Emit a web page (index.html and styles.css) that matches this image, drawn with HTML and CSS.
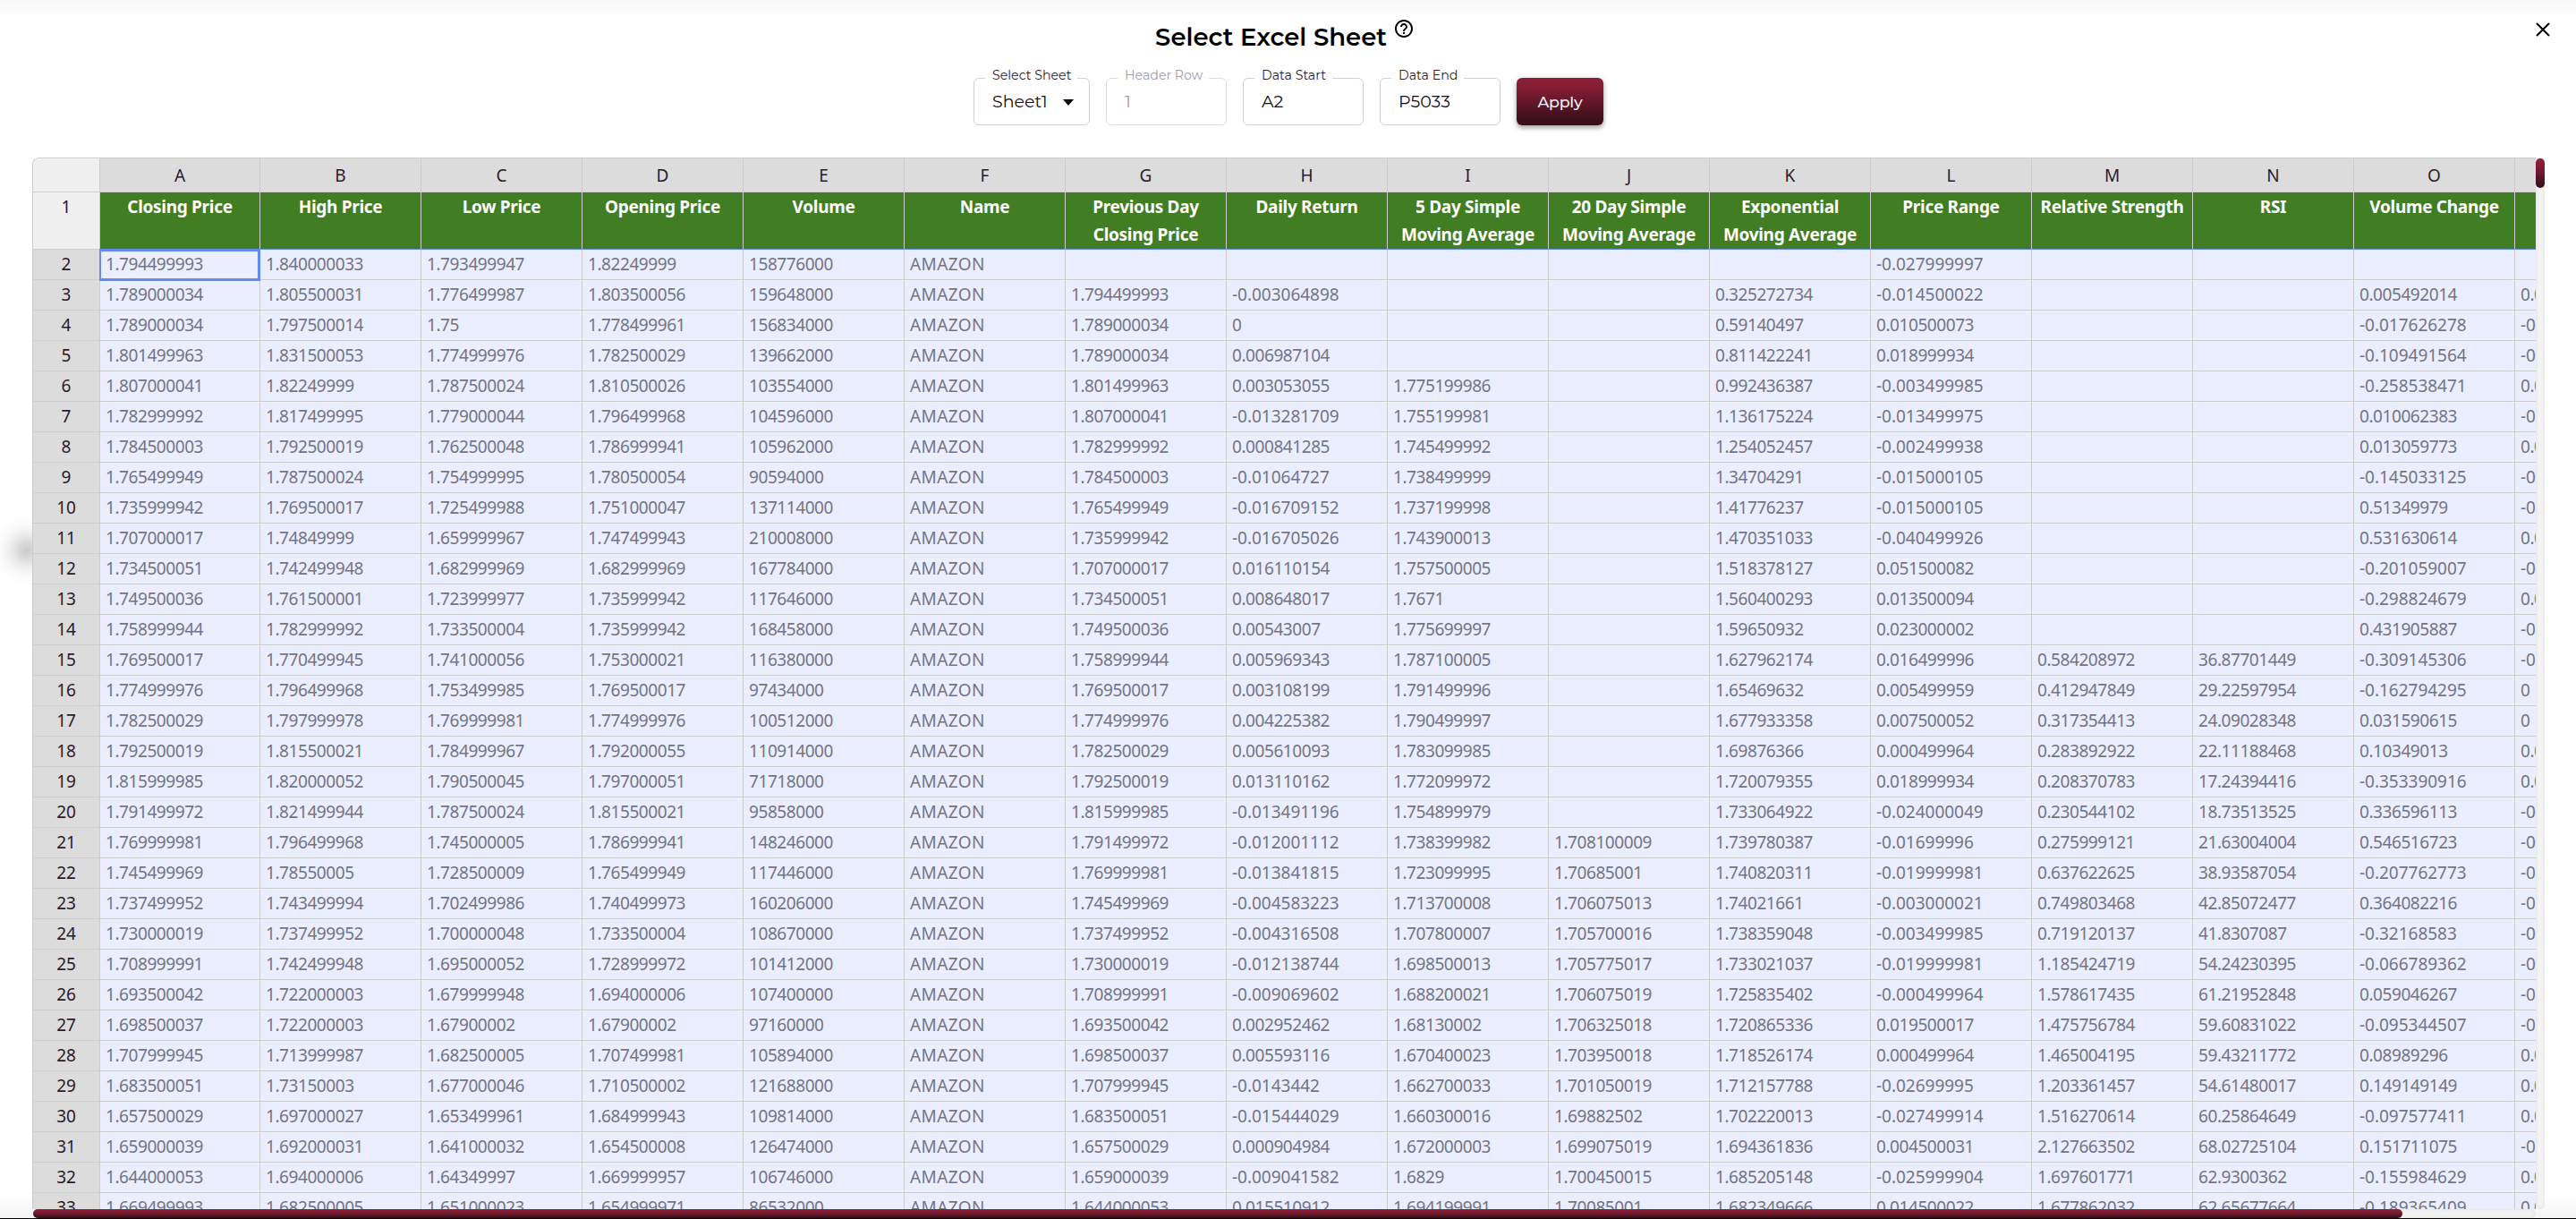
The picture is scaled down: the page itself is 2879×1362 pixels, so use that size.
FILE: index.html
```html
<!DOCTYPE html>
<html lang="en">
<head>
<meta charset="utf-8">
<title>Select Excel Sheet</title>
<link rel="stylesheet" href="styles.css">
</head>
<body>
<main class="dialog">
  <header class="dialog-head">
    <div class="title-row">
      <h1 class="title">Select Excel Sheet</h1>
      <svg class="help" viewBox="0 0 24 24"><path d="M11 18h2v-2h-2v2zm1-16C6.48 2 2 6.48 2 12s4.480 10 10 10 10-4.480 10-10S17.520 2 12 2zm0 18c-4.410 0-8-3.590-8-8s3.590-8 8-8 8 3.590 8 8-3.590 8-8 8zm0-14c-2.210 0-4 1.790-4 4h2c0-1.100.9-2 2-2s2 .9 2 2c0 2-3 1.750-3 5h2c0-2.250 3-2.500 3-5 0-2.210-1.790-4-4-4z"/></svg>
    </div>
    <svg class="close" viewBox="0 0 16 16"><path d="M1 1l14 14M15 1L1 15"/></svg>
    <form class="controls">
      <div class="field field-select"><span class="field-label">Select Sheet</span>Sheet1<i class="caret"></i></div>
      <div class="field field-disabled"><span class="field-label">Header Row</span>1</div>
      <div class="field"><span class="field-label">Data Start</span>A2</div>
      <div class="field"><span class="field-label">Data End</span>P5033</div>
      <button class="apply" type="button">Apply</button>
    </form>
  </header>
  <section class="viewer">
    <div class="sheet">
      <table class="grid">
        <colgroup id="cols"></colgroup>
        <thead id="head"></thead>
        <tbody id="body"></tbody>
      </table>
    </div>
    <div class="track track-v"><div class="thumb"></div></div>
    <div class="track track-h"><div class="thumb"></div></div>
  </section>
</main>
<script src="sheet.js"></script>
</body>
</html>
```

FILE: styles.css
```css
* { box-sizing: border-box; }
body { margin: 0; background: #fff; font-family: "Montserrat", "Inter", sans-serif; }

.dialog {
  height: 1362px;
  overflow: hidden;
  padding-left: 36px;
  border-bottom: 1px solid #000;
  background:
    linear-gradient(#f8f8f8, #f9f9f9 4px, #fff 18px) top / 100% 18px no-repeat,
    linear-gradient(#fff, #f4f4f4) bottom / 100% 26px no-repeat,
    radial-gradient(circle at 30px 615px, #cbcbcb 0, #d8d8d8 8px, #ececec 18px, #f9f9f9 28px, #fff 38px);
}

.dialog-head { position: relative; height: 176px; margin-left: -36px; padding-top: 21px; }
.title-row { display: flex; justify-content: center; gap: 7px; height: 40px; padding-right: 7px; }
.title { margin: 0; font-size: 27.5px; font-weight: 600; line-height: 40px; color: #000; }
.help { width: 24px; height: 24px; margin-top: -1px; }
.close { position: absolute; left: 2834px; top: 25px; width: 16px; height: 16px; stroke: #000; stroke-width: 2; }

.controls { display: flex; justify-content: center; gap: 18px; margin-top: 26px; padding-left: 1px; }
.field {
  position: relative;
  width: 135px;
  height: 53px;
  padding-left: 20px;
  border: 1px solid #cfd0de;
  border-radius: 6px;
  font-size: 19px;
  line-height: 51px;
  color: #180c18;
}
.field-select { width: 130px; }
.field-label {
  position: absolute;
  left: 12px;
  top: -12px;
  padding: 0 7px 0 8px;
  background: #fff;
  font-size: 14.2px;
  line-height: 16px;
  white-space: nowrap;
  color: #2c1c30;
}
.field-disabled, .field-disabled .field-label { color: #9c9dac; }
.field-disabled { border-color: #dcdce4; }
.caret {
  position: absolute;
  right: 17px;
  top: 23px;
  border: 6px solid transparent;
  border-top: 7px solid #000;
  border-bottom: 0;
}
.apply {
  width: 97px;
  height: 53px;
  padding: 0;
  border: 0;
  border-radius: 6px;
  background: linear-gradient(#8c1f35 0%, #851d33 22%, #3a0f1c 88%);
  box-shadow: 0 3px 5px rgba(0, 0, 0, .3), 0 1px 8px rgba(0, 0, 0, .12);
  font: 500 17.5px "Montserrat", "Inter", sans-serif;
  letter-spacing: -.3px;
  color: #f3eef0;
}

.viewer { display: grid; grid-template-columns: 2798px 10px; grid-template-rows: 1175px 10px; }
.sheet { overflow: hidden; border: 1px solid #ccc; border-width: 1px 0 0 1px; border-radius: 8px 0 0 0; }
.grid {
  width: 2954px;
  table-layout: fixed;
  border-collapse: separate;
  border-spacing: 0;
  font: 19px/31.5px "Noto Sans", "Open Sans", sans-serif;
}
.col-index { width: 75px; }
.col-first { width: 179px; }
.col { width: 180px; }
.grid th, .grid td {
  height: 34px;
  padding: 1px 0 0;
  border: 1px solid #ccc;
  border-width: 0 1px 1px 0;
  vertical-align: top;
  overflow: hidden;
  white-space: nowrap;
}
.grid th { background: #dcdcdc; font-weight: 400; text-align: center; color: #2b1a2b; }
.grid thead th { height: 38px; padding-top: 4px; }
.grid thead th:first-child, .grid .row-title th { background: #f0f0f0; }
.grid td { padding-left: 6px; background: #ebeeff; color: #737585; letter-spacing: -.43px; }
.grid td.negative { letter-spacing: -.02px; }
.grid td.word { letter-spacing: .4px; }
.grid .row-title td {
  height: 64px;
  padding: 1px 0 0;
  border-bottom-color: #628bf8;
  background: #417d23;
  font-weight: 700;
  line-height: 31px;
  text-align: center;
  letter-spacing: -.3px;
  color: #fff;
}
.grid td.active { position: relative; overflow: visible; }
.active::after {
  content: "";
  position: absolute;
  inset: -1px -1px -2px -1px;
  border: solid #628bf8;
  border-width: 3px 3px 3px 2px;
}

.track { border-radius: 5px; background: #f4f4f4; box-shadow: inset 0 0 4px #dcdcdc; }
.track-v { padding-top: 1px; }
.track-h { margin-left: 1px; }
.thumb { height: 10px; border-radius: 5px; background: linear-gradient(#8c1f35, #851d33 25%, #3a0f1c 95%); }
.track-v .thumb { height: 33px; }
.track-h .thumb { width: 2648px; }
```

FILE: sheet.js
```js
const titles = ["Closing Price", "High Price", "Low Price", "Opening Price", "Volume", "Name",
  "Previous Day<br>Closing Price", "Daily Return", "5 Day Simple<br>Moving Average",
  "20 Day Simple<br>Moving Average", "Exponential<br>Moving Average", "Price Range",
  "Relative Strength", "RSI", "Volume Change", ""];

// Columns A-E, G-P; the Name column (F) is the same in every row.
const data = `
1.794499993,1.840000033,1.793499947,1.82249999,158776000,,,,,,-0.027999997,,,,
1.789000034,1.805500031,1.776499987,1.803500056,159648000,1.794499993,-0.003064898,,,0.325272734,-0.014500022,,,0.005492014,0.00
1.789000034,1.797500014,1.75,1.778499961,156834000,1.789000034,0,,,0.59140497,0.010500073,,,-0.017626278,-0.0
1.801499963,1.831500053,1.774999976,1.782500029,139662000,1.789000034,0.006987104,,,0.811422241,0.018999934,,,-0.109491564,-0.0
1.807000041,1.82249999,1.787500024,1.810500026,103554000,1.801499963,0.003053055,1.775199986,,0.992436387,-0.003499985,,,-0.258538471,0.00
1.782999992,1.817499995,1.779000044,1.796499968,104596000,1.807000041,-0.013281709,1.755199981,,1.136175224,-0.013499975,,,0.010062383,-0.0
1.784500003,1.792500019,1.762500048,1.786999941,105962000,1.782999992,0.000841285,1.745499992,,1.254052457,-0.002499938,,,0.013059773,0.00
1.765499949,1.787500024,1.754999995,1.780500054,90594000,1.784500003,-0.01064727,1.738499999,,1.34704291,-0.015000105,,,-0.145033125,-0.0
1.735999942,1.769500017,1.725499988,1.751000047,137114000,1.765499949,-0.016709152,1.737199998,,1.41776237,-0.015000105,,,0.51349979,-0.0
1.707000017,1.74849999,1.659999967,1.747499943,210008000,1.735999942,-0.016705026,1.743900013,,1.470351033,-0.040499926,,,0.531630614,0.00
1.734500051,1.742499948,1.682999969,1.682999969,167784000,1.707000017,0.016110154,1.757500005,,1.518378127,0.051500082,,,-0.201059007,-0.0
1.749500036,1.761500001,1.723999977,1.735999942,117646000,1.734500051,0.008648017,1.7671,,1.560400293,0.013500094,,,-0.298824679,0.00
1.758999944,1.782999992,1.733500004,1.735999942,168458000,1.749500036,0.00543007,1.775699997,,1.59650932,0.023000002,,,0.431905887,-0.0
1.769500017,1.770499945,1.741000056,1.753000021,116380000,1.758999944,0.005969343,1.787100005,,1.627962174,0.016499996,0.584208972,36.87701449,-0.309145306,-0.0
1.774999976,1.796499968,1.753499985,1.769500017,97434000,1.769500017,0.003108199,1.791499996,,1.65469632,0.005499959,0.412947849,29.22597954,-0.162794295,0
1.782500029,1.797999978,1.769999981,1.774999976,100512000,1.774999976,0.004225382,1.790499997,,1.677933358,0.007500052,0.317354413,24.09028348,0.031590615,0
1.792500019,1.815500021,1.784999967,1.792000055,110914000,1.782500029,0.005610093,1.783099985,,1.69876366,0.000499964,0.283892922,22.11188468,0.10349013,0.00
1.815999985,1.820000052,1.790500045,1.797000051,71718000,1.792500019,0.013110162,1.772099972,,1.720079355,0.018999934,0.208370783,17.24394416,-0.353390916,0.00
1.791499972,1.821499944,1.787500024,1.815500021,95858000,1.815999985,-0.013491196,1.754899979,,1.733064922,-0.024000049,0.230544102,18.73513525,0.336596113,-0.0
1.769999981,1.796499968,1.745000005,1.786999941,148246000,1.791499972,-0.012001112,1.738399982,1.708100009,1.739780387,-0.01699996,0.275999121,21.63004004,0.546516723,-0.0
1.745499969,1.78550005,1.728500009,1.765499949,117446000,1.769999981,-0.013841815,1.723099995,1.70685001,1.740820311,-0.019999981,0.637622625,38.93587054,-0.207762773,-0.0
1.737499952,1.743499994,1.702499986,1.740499973,160206000,1.745499969,-0.004583223,1.713700008,1.706075013,1.74021661,-0.003000021,0.749803468,42.85072477,0.364082216,-0.0
1.730000019,1.737499952,1.700000048,1.733500004,108670000,1.737499952,-0.004316508,1.707800007,1.705700016,1.738359048,-0.003499985,0.719120137,41.8307087,-0.32168583,-0.0
1.708999991,1.742499948,1.695000052,1.728999972,101412000,1.730000019,-0.012138744,1.698500013,1.705775017,1.733021037,-0.019999981,1.185424719,54.24230395,-0.066789362,-0.0
1.693500042,1.722000003,1.679999948,1.694000006,107400000,1.708999991,-0.009069602,1.688200021,1.706075019,1.725835402,-0.000499964,1.578617435,61.21952848,0.059046267,-0.0
1.698500037,1.722000003,1.67900002,1.67900002,97160000,1.693500042,0.002952462,1.68130002,1.706325018,1.720865336,0.019500017,1.475756784,59.60831022,-0.095344507,-0.0
1.707999945,1.713999987,1.682500005,1.707499981,105894000,1.698500037,0.005593116,1.670400023,1.703950018,1.718526174,0.000499964,1.465004195,59.43211772,0.08989296,0.00
1.683500051,1.73150003,1.677000046,1.710500002,121688000,1.707999945,-0.0143442,1.662700033,1.701050019,1.712157788,-0.02699995,1.203361457,54.61480017,0.149149149,0.00
1.657500029,1.697000027,1.653499961,1.684999943,109814000,1.683500051,-0.015444029,1.660300016,1.69882502,1.702220013,-0.027499914,1.516270614,60.25864649,-0.097577411,0.00
1.659000039,1.692000031,1.641000032,1.654500008,126474000,1.657500029,0.000904984,1.672000003,1.699075019,1.694361836,0.004500031,2.127663502,68.02725104,0.151711075,-0.0
1.644000053,1.694000006,1.64349997,1.669999957,106746000,1.659000039,-0.009041582,1.6829,1.700450015,1.685205148,-0.025999904,1.697601771,62.9300362,-0.155984629,0.00
1.669499993,1.682500005,1.651000023,1.654999971,86532000,1.644000053,0.015510912,1.694199991,1.70085001,1.682349666,0.014500022,1.677862032,62.65677664,-0.189365409,0.00`;

const rows = data.trim().split("\n").map(line => {
  const cells = line.split(",");
  cells.splice(5, 0, "AMAZON");
  return cells;
});

const cellClass = (value, r, c) =>
  r === 0 && c === 0 ? "active" : value[0] === "-" ? "negative" : c === 5 ? "word" : "number";

document.getElementById("cols").innerHTML =
  '<col class="col-index"><col class="col-first">' + '<col class="col">'.repeat(15);
document.getElementById("head").innerHTML =
  "<tr><th></th>" + [..."ABCDEFGHIJKLMNO"].map(l => `<th>${l}</th>`).join("") + "<th></th></tr>";
document.getElementById("body").innerHTML =
  '<tr class="row-title"><th>1</th>' + titles.map(t => `<td>${t}</td>`).join("") + "</tr>" +
  rows.map((cells, r) =>
    `<tr><th>${r + 2}</th>` +
    cells.map((v, c) => `<td class="${cellClass(v, r, c)}">${v}</td>`).join("") + "</tr>").join("");
```
